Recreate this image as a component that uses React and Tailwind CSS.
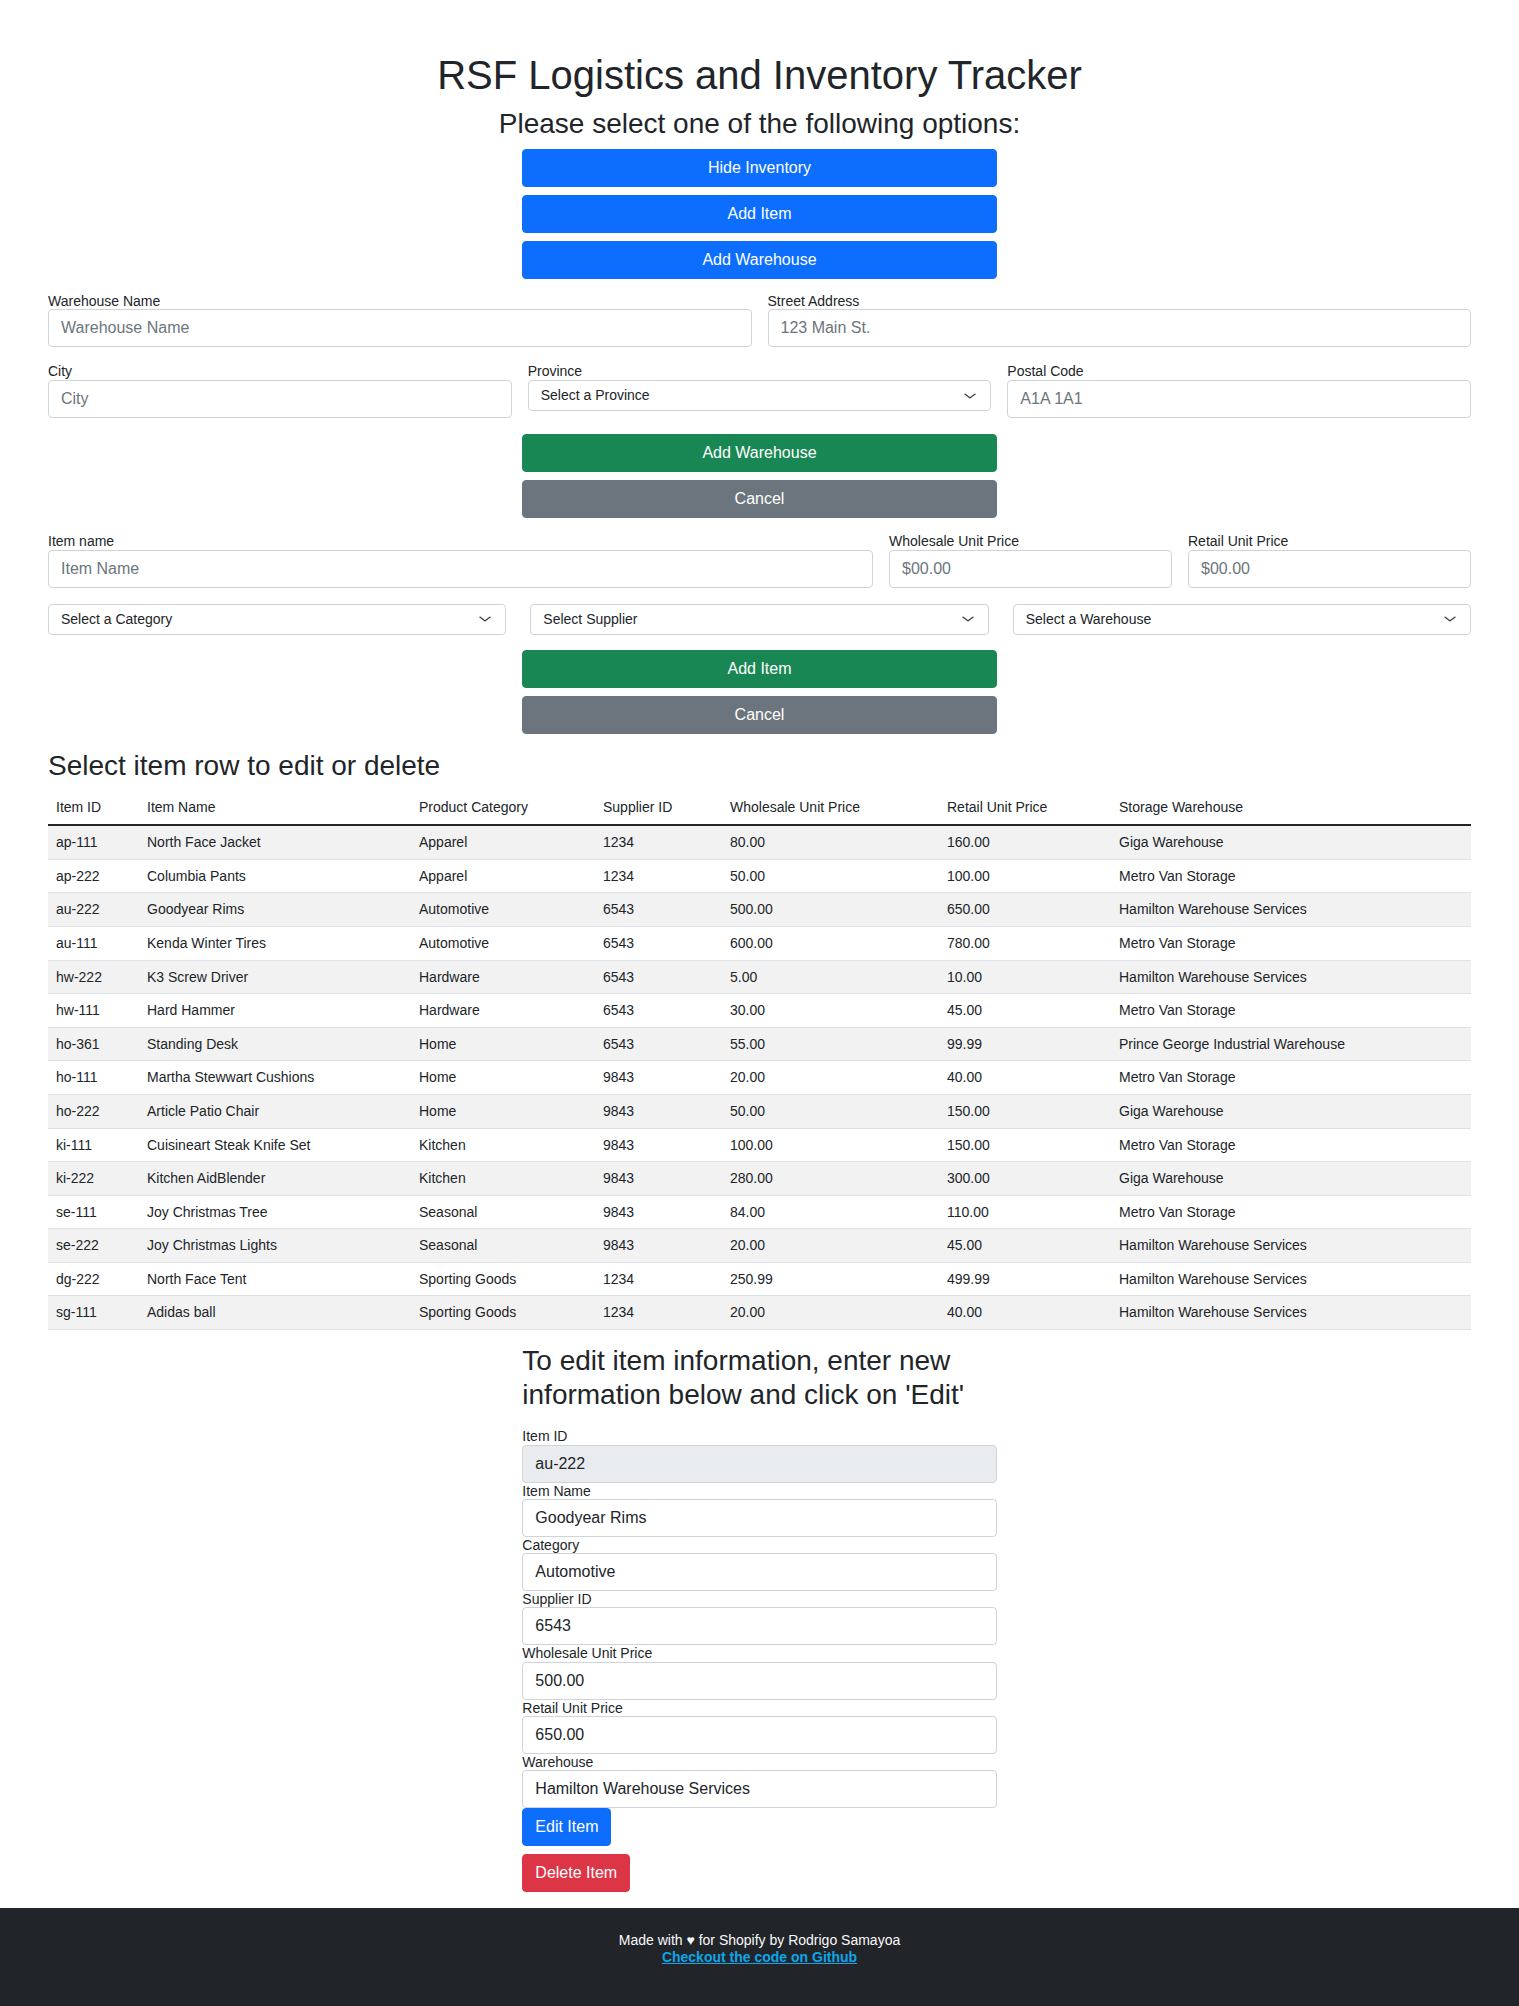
import React from "react";

// Inventory rows shown in the table
const ITEMS = [
  ["ap-111", "North Face Jacket", "Apparel", "1234", "80.00", "160.00", "Giga Warehouse"],
  ["ap-222", "Columbia Pants", "Apparel", "1234", "50.00", "100.00", "Metro Van Storage"],
  ["au-222", "Goodyear Rims", "Automotive", "6543", "500.00", "650.00", "Hamilton Warehouse Services"],
  ["au-111", "Kenda Winter Tires", "Automotive", "6543", "600.00", "780.00", "Metro Van Storage"],
  ["hw-222", "K3 Screw Driver", "Hardware", "6543", "5.00", "10.00", "Hamilton Warehouse Services"],
  ["hw-111", "Hard Hammer", "Hardware", "6543", "30.00", "45.00", "Metro Van Storage"],
  ["ho-361", "Standing Desk", "Home", "6543", "55.00", "99.99", "Prince George Industrial Warehouse"],
  ["ho-111", "Martha Stewwart Cushions", "Home", "9843", "20.00", "40.00", "Metro Van Storage"],
  ["ho-222", "Article Patio Chair", "Home", "9843", "50.00", "150.00", "Giga Warehouse"],
  ["ki-111", "Cuisineart Steak Knife Set", "Kitchen", "9843", "100.00", "150.00", "Metro Van Storage"],
  ["ki-222", "Kitchen AidBlender", "Kitchen", "9843", "280.00", "300.00", "Giga Warehouse"],
  ["se-111", "Joy Christmas Tree", "Seasonal", "9843", "84.00", "110.00", "Metro Van Storage"],
  ["se-222", "Joy Christmas Lights", "Seasonal", "9843", "20.00", "45.00", "Hamilton Warehouse Services"],
  ["dg-222", "North Face Tent", "Sporting Goods", "1234", "250.99", "499.99", "Hamilton Warehouse Services"],
  ["sg-111", "Adidas ball", "Sporting Goods", "1234", "20.00", "40.00", "Hamilton Warehouse Services"],
];

const COLUMNS = [
  { title: "Item ID", width: "w-[91px]" },
  { title: "Item Name", width: "w-[272px]" },
  { title: "Product Category", width: "w-[184px]" },
  { title: "Supplier ID", width: "w-[127px]" },
  { title: "Wholesale Unit Price", width: "w-[217px]" },
  { title: "Retail Unit Price", width: "w-[172px]" },
  { title: "Storage Warehouse", width: "" },
];

const EDIT_FIELDS = [
  { label: "Item ID", value: "au-222", disabled: true },
  { label: "Item Name", value: "Goodyear Rims" },
  { label: "Category", value: "Automotive" },
  { label: "Supplier ID", value: "6543" },
  { label: "Wholesale Unit Price", value: "500.00" },
  { label: "Retail Unit Price", value: "650.00" },
  { label: "Warehouse", value: "Hamilton Warehouse Services" },
];

const inputBase =
  "block h-[38px] w-full rounded border border-[#ced4da] px-3 text-base text-[#212529] outline-none placeholder:text-[#6c757d]";

function Chevron() {
  return (
    <svg width="16" height="12" viewBox="0 0 16 16" preserveAspectRatio="none" fill="none">
      <path
        d="m3 5.5 5 5 5-5"
        stroke="#343a40"
        strokeWidth="1.5"
        strokeLinecap="round"
        strokeLinejoin="round"
      />
    </svg>
  );
}

function FakeSelect({ text }) {
  return (
    <div className="flex h-[31px] w-full items-center justify-between rounded border border-[#ced4da] bg-white pl-3 pr-3 text-sm leading-[21px] text-[#212529]">
      <span>{text}</span>
      <Chevron />
    </div>
  );
}

function Field({ label, placeholder }) {
  return (
    <div>
      <label className="block text-sm leading-[16.8px]">{label}</label>
      <input className={`${inputBase} bg-white`} placeholder={placeholder} />
    </div>
  );
}

function Btn({ color, children, className = "" }) {
  return (
    <button
      type="button"
      className={`block h-[38px] rounded border px-3 text-base leading-6 text-white ${color} ${className}`}
    >
      {children}
    </button>
  );
}

export default function App() {
  return (
    <div
      className="min-h-[2006px] bg-white text-[#212529]"
      style={{ fontFamily: '"Liberation Sans", Arial, sans-serif' }}
    >
      <main className="px-12 pt-[51px]">
        {/* Header */}
        <h1 className="mb-2 text-center text-[40px] leading-[48px]">
          RSF Logistics and Inventory Tracker
        </h1>
        <h3 className="mb-2 text-center text-[28px] leading-[33.6px]">
          Please select one of the following options:
        </h3>

        <div className="mx-auto flex w-1/3 flex-col gap-2">
          <Btn color="w-full bg-[#0d6efd] border-[#0d6efd]">Hide Inventory</Btn>
          <Btn color="w-full bg-[#0d6efd] border-[#0d6efd]">Add Item</Btn>
          <Btn color="w-full bg-[#0d6efd] border-[#0d6efd]">Add Warehouse</Btn>
        </div>

        {/* Add warehouse form */}
        <div className="mt-[14px] grid grid-cols-2 gap-4">
          <Field label="Warehouse Name" placeholder="Warehouse Name" />
          <Field label="Street Address" placeholder="123 Main St." />
        </div>
        <div className="mt-4 grid grid-cols-3 items-start gap-4">
          <Field label="City" placeholder="City" />
          <div>
            <label className="block text-sm leading-[16.8px]">Province</label>
            <FakeSelect text="Select a Province" />
          </div>
          <Field label="Postal Code" placeholder="A1A 1A1" />
        </div>
        <div className="mx-auto mt-4 flex w-1/3 flex-col gap-2">
          <Btn color="w-full bg-[#198754] border-[#198754]">Add Warehouse</Btn>
          <Btn color="w-full bg-[#6c757d] border-[#6c757d]">Cancel</Btn>
        </div>

        {/* Add item form */}
        <div className="mt-[15px] grid grid-cols-[1fr_283px_283px] gap-4">
          <Field label="Item name" placeholder="Item Name" />
          <Field label="Wholesale Unit Price" placeholder="$00.00" />
          <Field label="Retail Unit Price" placeholder="$00.00" />
        </div>
        <div className="mt-4 grid grid-cols-3 gap-6">
          <FakeSelect text="Select a Category" />
          <FakeSelect text="Select Supplier" />
          <FakeSelect text="Select a Warehouse" />
        </div>
        <div className="mx-auto mt-[15px] flex w-1/3 flex-col gap-2">
          <Btn color="w-full bg-[#198754] border-[#198754]">Add Item</Btn>
          <Btn color="w-full bg-[#6c757d] border-[#6c757d]">Cancel</Btn>
        </div>

        {/* Inventory table */}
        <h3 className="mb-2 mt-[15px] text-[28px] leading-[33.6px]">
          Select item row to edit or delete
        </h3>
        <table className="mb-[14px] w-full table-fixed border-collapse text-sm leading-[16.6px]">
          <thead>
            <tr>
              {COLUMNS.map((c) => (
                <th
                  key={c.title}
                  className={`${c.width} border-b-2 border-[#212529] px-2 py-[8.5px] text-left font-normal`}
                >
                  {c.title}
                </th>
              ))}
            </tr>
          </thead>
          <tbody>
            {ITEMS.map((row, i) => (
              <tr key={row[0]} className={i % 2 === 0 ? "bg-[#f2f2f2]" : "bg-white"}>
                {row.map((cell, j) => (
                  <td key={j} className="border-b border-[#dee2e6] px-2 py-2">
                    {cell}
                  </td>
                ))}
              </tr>
            ))}
          </tbody>
        </table>

        {/* Edit item form */}
        <div className="mx-auto w-1/3 pb-4">
          <h3 className="mb-[17px] text-[28px] leading-[33.6px]">
            To edit item information, enter new information below and click on 'Edit'
          </h3>
          {EDIT_FIELDS.map((f) => (
            <div key={f.label}>
              <label className="block text-sm leading-[16.3px]">{f.label}</label>
              <input
                className={`${inputBase} ${f.disabled ? "bg-[#e9ecef]" : "bg-white"}`}
                defaultValue={f.value}
                readOnly={f.disabled}
              />
            </div>
          ))}
          <Btn color="bg-[#0d6efd] border-[#0d6efd]">Edit Item</Btn>
          <Btn color="bg-[#dc3545] border-[#dc3545]" className="mt-2">
            Delete Item
          </Btn>
        </div>
      </main>

      {/* Footer */}
      <footer className="h-[98px] bg-[#212529] pt-6 text-center text-sm leading-[17px] text-[#f8f9fa]">
        <p>Made with ♥ for Shopify by Rodrigo Samayoa</p>
        <a href="#" className="font-bold text-[#0ea5e9] underline">
          Checkout the code on Github
        </a>
      </footer>
    </div>
  );
}
